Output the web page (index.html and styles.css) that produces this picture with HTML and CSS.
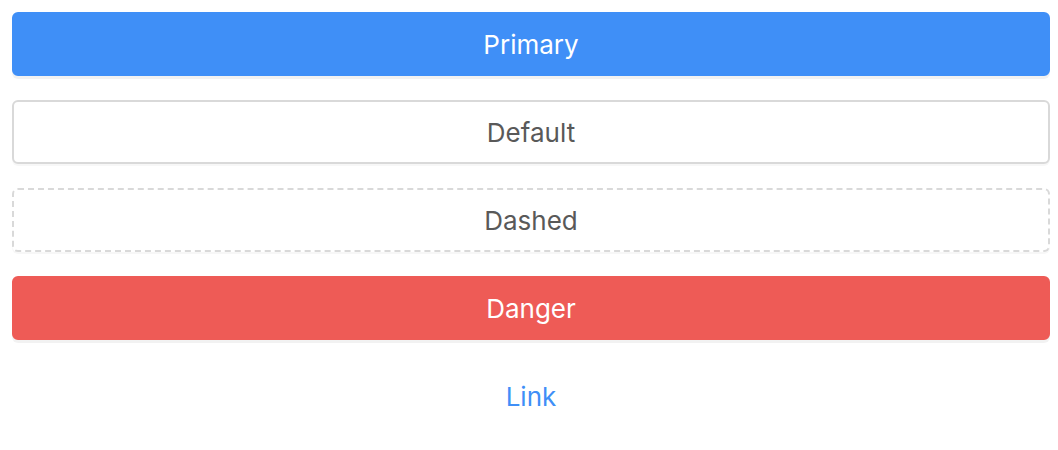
FILE: index.html
```html
<!DOCTYPE html>
<html>
<head>
<meta charset="utf-8">
<link rel="stylesheet" href="styles.css">
</head>
<body>
<div class="stack">
  <button class="btn btn-primary">Primary</button>
  <button class="btn btn-default">Default</button>
  <button class="btn btn-dashed">Dashed</button>
  <button class="btn btn-danger">Danger</button>
  <button class="btn btn-link">Link</button>
</div>
</body>
</html>
```
FILE: styles.css
```css
html, body { margin: 0; padding: 0; background: #fff; }
body { font-family: Inter, "Noto Sans", sans-serif; }
.stack {
  display: flex;
  flex-direction: column;
  gap: 24px;
  padding: 12px 8px 0 12px;
}
.btn {
  height: 64px;
  width: 100%;
  border-radius: 6px;
  font-family: Inter, "Noto Sans", sans-serif;
  font-size: 26px;
  font-weight: 400;
  border: 2px solid transparent;
  background: #fff;
  padding: 0;
  box-sizing: border-box;
  box-shadow: 0 2px 0 rgba(0,0,0,0.03);
}
.btn-primary { background: #3f8ff7; color: #fff; border-color: #3f8ff7; box-shadow: 0 3px 0 rgba(0,0,0,0.05); }
.btn-default { border-color: #d9d9d9; color: #595959; }
.btn-dashed { border: 2px dashed #d9d9d9; color: #595959; }
.btn-danger { background: #ee5b56; border-color: #ee5b56; color: #fff; box-shadow: 0 3px 0 rgba(0,0,0,0.05); }
.btn-link { color: #3f8ff7; box-shadow: none; }
```
